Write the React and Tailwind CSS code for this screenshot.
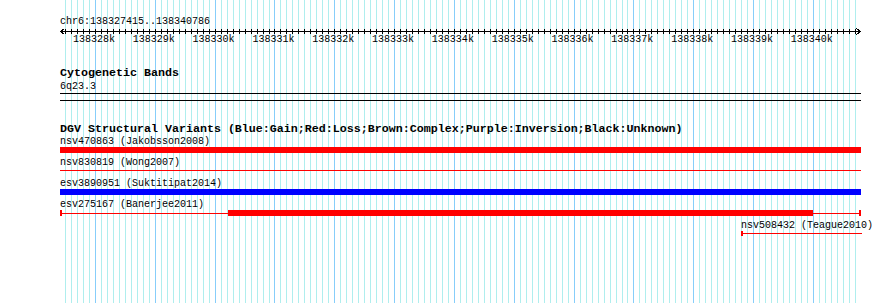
import React from "react"

const START = 138327415
const END = 138340786
const SCALE = 800 / (END - START)

// x position on the page (panel starts at 60px)
const toX = (bp) => 60 + (bp - START) * SCALE

const minorTicks = []
for (let bp = 138327500; bp <= END; bp += 100) minorTicks.push(bp)
const majorTicks = []
for (let bp = 138328000; bp <= END; bp += 1000) majorTicks.push(bp)

function Grid() {
  return (
    <svg
      className="absolute left-0 top-0 pointer-events-none"
      width="890"
      height="303"
      shapeRendering="crispEdges"
    >
      {minorTicks.map((bp) => {
        const x = Math.round(toX(bp)) + 0.5
        return <line key={bp} x1={x} x2={x} y1="0" y2="303" stroke="#afeeee" />
      })}
      {majorTicks.map((bp) => {
        const x = Math.round(toX(bp)) + 0.5
        return <line key={bp} x1={x} x2={x} y1="0" y2="303" stroke="#87cefa" />
      })}
    </svg>
  )
}

function Ruler() {
  return (
    <svg width="802" height="6" className="block overflow-visible" shapeRendering="crispEdges">
      <line x1="0" x2="801" y1="3.5" y2="3.5" stroke="#000" />
      {minorTicks.map((bp) => {
        const x = Math.round(toX(bp)) - 60 + 0.5
        return <line key={bp} x1={x} x2={x} y1="1" y2="6" stroke="#000" />
      })}
      <polyline points="4.5,0.5 0.5,3.5 4.5,6.5" fill="none" stroke="#000" />
      <polyline points="796.5,0.5 800.5,3.5 796.5,6.5" fill="none" stroke="#000" />
    </svg>
  )
}

// one structural variant row: label above, glyph below
function Variant({ label, labelLeft = 0, children }) {
  return (
    <div className="h-[21px]">
      <div className="h-[11px] text-[10px] leading-[11px] whitespace-nowrap" style={{ marginLeft: labelLeft }}>
        {label}
      </div>
      <svg width="802" height="10" className="block" shapeRendering="crispEdges">
        {children}
      </svg>
    </div>
  )
}

export default function App() {
  return (
    <div className="relative w-[890px] h-[303px] bg-white overflow-hidden text-black font-['Liberation_Mono',monospace]">
      <Grid />

      <div className="relative ml-[60px] w-[802px] pt-[16px]">
        {/* Ruler */}
        <div className="h-[12px] text-[10px] leading-[12px]">chr6:138327415..138340786</div>
        <Ruler />
        <div className="flex h-[12px] text-[10px] leading-[12px] pl-[4px]">
          {majorTicks.map((bp) => (
            <div key={bp} className="w-[59.83px] shrink-0 text-center">
              {bp / 1000}k
            </div>
          ))}
        </div>

        {/* Cytogenetic Bands */}
        <div className="mt-[21px] h-[13px] text-[11.67px] leading-[13px] font-bold">Cytogenetic Bands</div>
        <div className="mt-[1px] h-[12px] text-[10px] leading-[12px]">6q23.3</div>
        <div className="h-px bg-black w-[801px]" />
        <div className="mt-[6px] h-px bg-black w-[801px]" />

        {/* DGV */}
        <div className="mt-[21px] h-[14px] text-[11.67px] leading-[14px] font-bold whitespace-nowrap">
          DGV Structural Variants (Blue:Gain;Red:Loss;Brown:Complex;Purple:Inversion;Black:Unknown)
        </div>

        <Variant label="nsv470863 (Jakobsson2008)">
          <rect x="0" y="0" width="801" height="6" fill="#ff0000" />
        </Variant>
        <Variant label="nsv830819 (Wong2007)">
          <rect x="0" y="2" width="801" height="1" fill="#ff0000" />
        </Variant>
        <Variant label="esv3890951 (Suktitipat2014)">
          <rect x="0" y="0" width="801" height="6" fill="#0000ff" />
        </Variant>
        <Variant label="esv275167 (Banerjee2011)">
          <rect x="0" y="3" width="801" height="1" fill="#ff0000" />
          <rect x="0" y="0" width="2" height="6" fill="#ff0000" />
          <rect x="799" y="0" width="2" height="6" fill="#ff0000" />
          <rect x="168" y="0" width="585" height="6" fill="#ff0000" />
        </Variant>
        <Variant label="nsv508432 (Teague2010)" labelLeft={681}>
          <rect x="681" y="2" width="121" height="1" fill="#ff0000" />
          <rect x="681" y="0" width="2" height="5" fill="#ff0000" />
        </Variant>
      </div>
    </div>
  )
}
